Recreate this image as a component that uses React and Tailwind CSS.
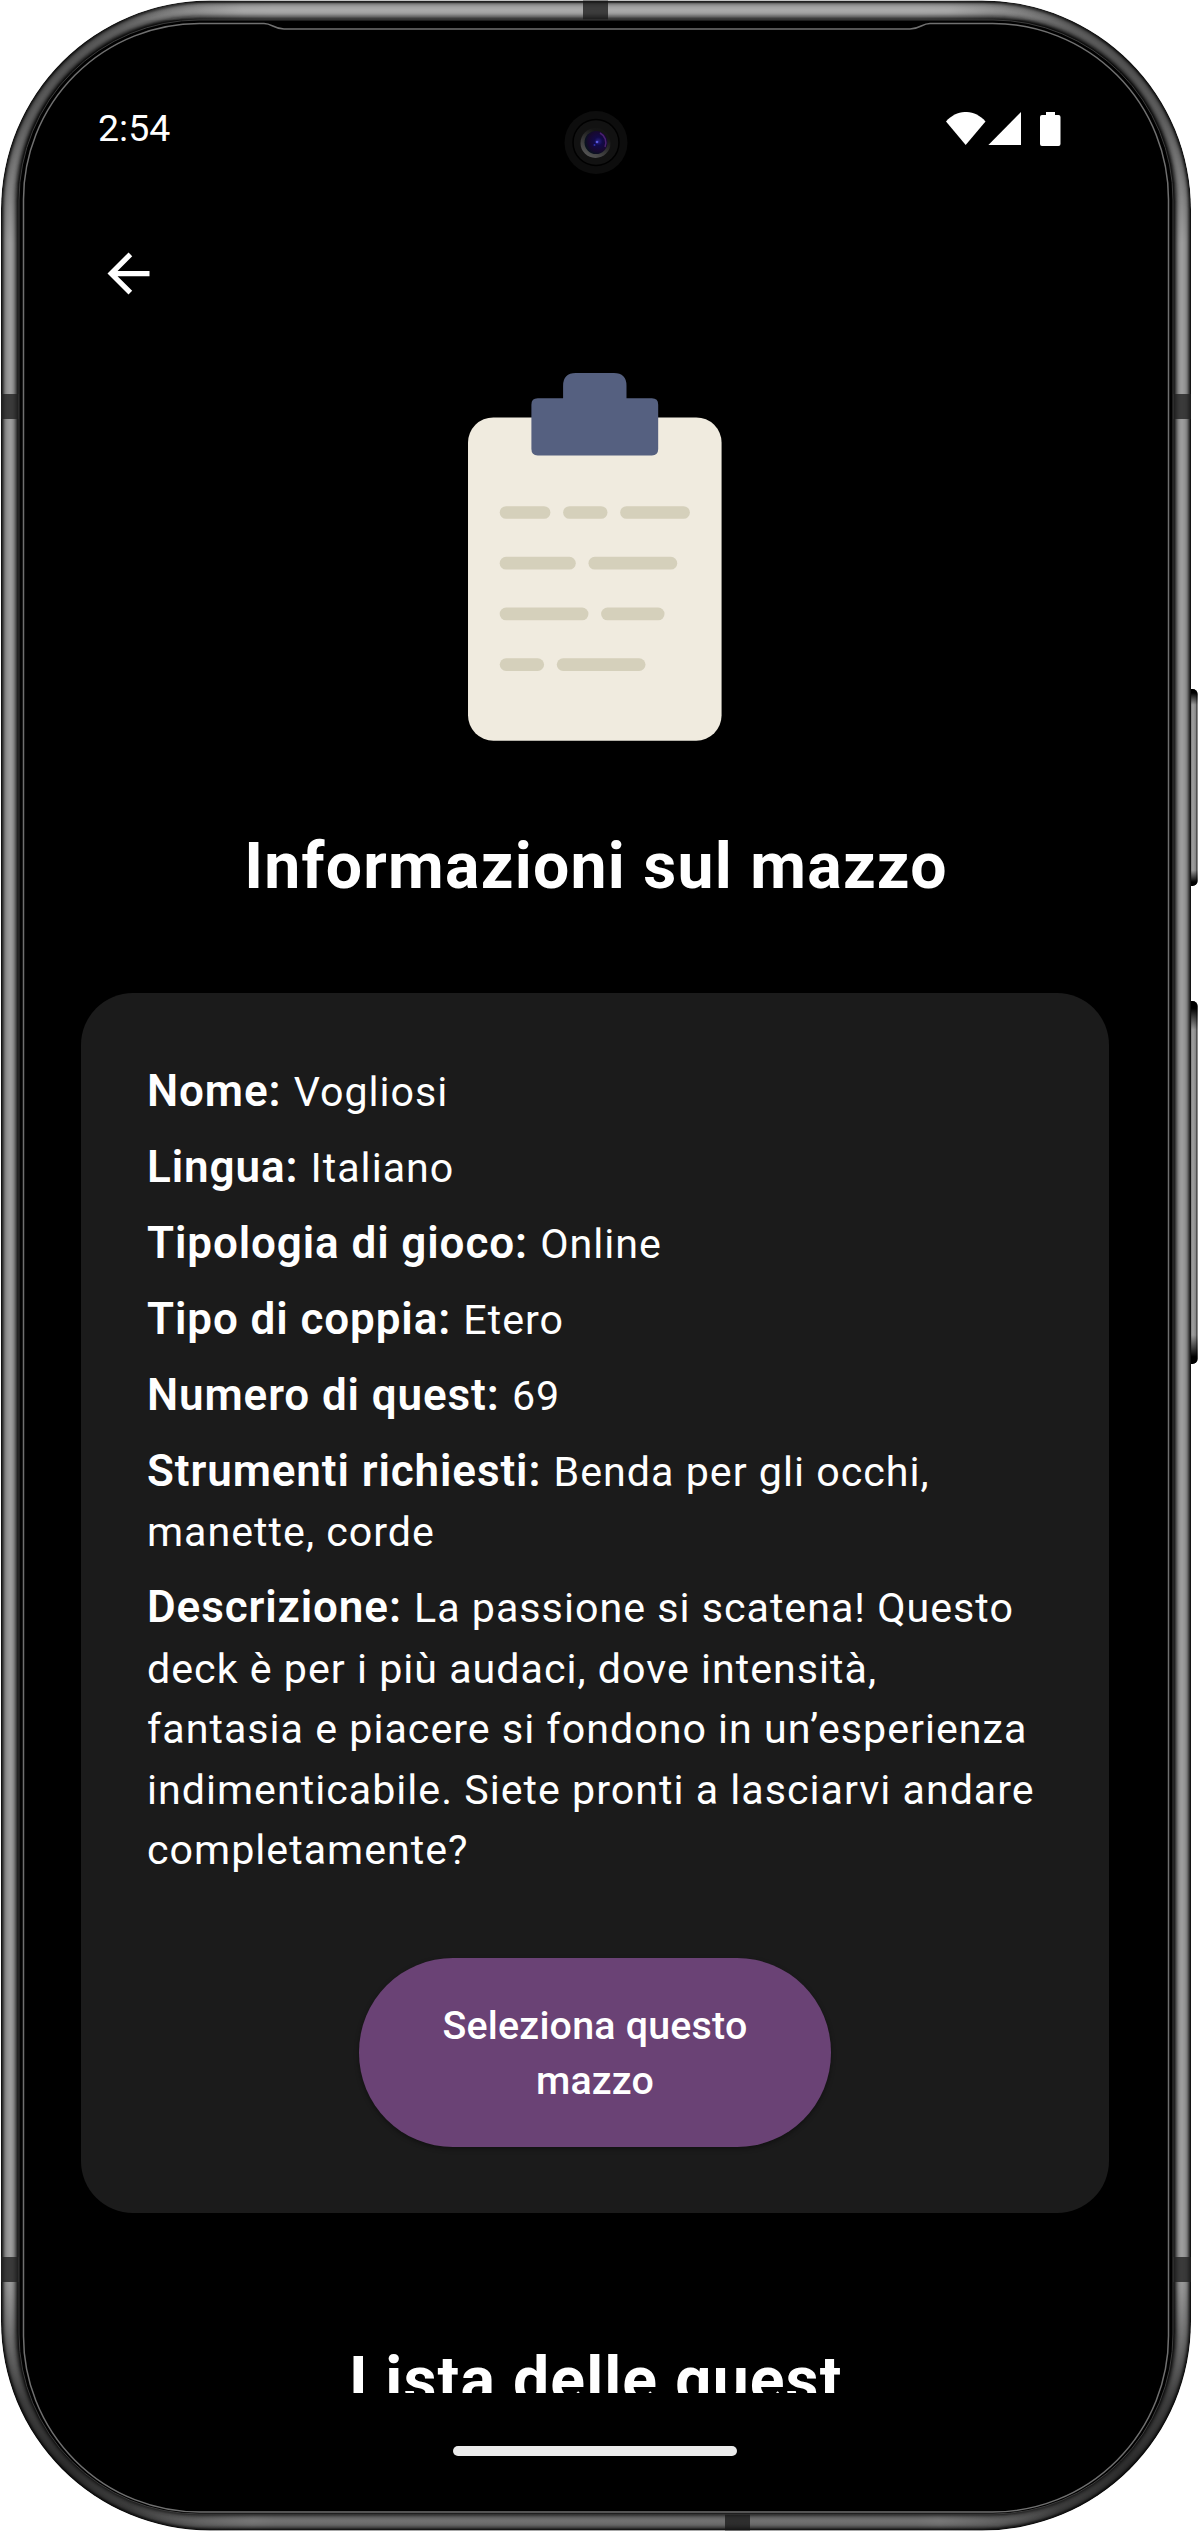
const FRAME_RINGS = [
  [0, "#141414"], [1, "#2e2e2e"], [2, "#4c4c4c"], [3, "#6a6a6a"], [4, "#808080"], [5, "#8c8c8c"],
  [6, "#949494"], [7, "#989898"], [8, "#9c9c9c"], [9, "#9c9c9c"], [10, "#989898"], [11, "#909090"],
  [12, "#848484"], [13, "#707070"], [14, "#585858"], [15, "#3c3c3c"], [16, "#222222"], [17, "#101010"],
];

const DETAILS = [
  ["Nome:", "Vogliosi"],
  ["Lingua:", "Italiano"],
  ["Tipologia di gioco:", "Online"],
  ["Tipo di coppia:", "Etero"],
  ["Numero di quest:", "69"],
  ["Strumenti richiesti:", "Benda per gli occhi, manette, corde"],
  [
    "Descrizione:",
    "La passione si scatena! Questo deck è per i più audaci, dove intensità, fantasia e piacere si fondono in un’esperienza indimenticabile. Siete pronti a lasciarvi andare completamente?",
  ],
];

function PhoneFrame() {
  return (
    <svg className="absolute inset-0" width="1198" height="2531" viewBox="0 0 1198 2531" fill="none" aria-hidden="true">
      <defs>
        <radialGradient id="cornerTop">
          <stop offset="0" stopColor="#000" stopOpacity="0.48" />
          <stop offset="0.35" stopColor="#000" stopOpacity="0.4" />
          <stop offset="1" stopColor="#000" stopOpacity="0" />
        </radialGradient>
        <radialGradient id="cornerBottom">
          <stop offset="0" stopColor="#000" stopOpacity="0.72" />
          <stop offset="0.4" stopColor="#000" stopOpacity="0.6" />
          <stop offset="1" stopColor="#000" stopOpacity="0" />
        </radialGradient>
        <linearGradient id="edgeLight" x1="0" x2="1" y1="0" y2="0">
          <stop offset="0.04" stopColor="#fff" stopOpacity="0" />
          <stop offset="0.2" stopColor="#fff" stopOpacity="0.14" />
          <stop offset="0.8" stopColor="#fff" stopOpacity="0.14" />
          <stop offset="0.96" stopColor="#fff" stopOpacity="0" />
        </linearGradient>
        <linearGradient id="edgeShade" x1="0" x2="1" y1="0" y2="0">
          <stop offset="0.04" stopColor="#000" stopOpacity="0" />
          <stop offset="0.2" stopColor="#000" stopOpacity="0.28" />
          <stop offset="0.8" stopColor="#000" stopOpacity="0.28" />
          <stop offset="0.96" stopColor="#000" stopOpacity="0" />
        </linearGradient>
        <linearGradient id="key" x1="0" x2="1" y1="0" y2="0">
          <stop offset="0" stopColor="#555" />
          <stop offset="0.4" stopColor="#606060" />
          <stop offset="0.65" stopColor="#a0a0a0" />
          <stop offset="0.85" stopColor="#8a8a8a" />
          <stop offset="1" stopColor="#1a1a1a" />
        </linearGradient>
        <linearGradient id="keyEnds" x1="0" x2="0" y1="0" y2="1">
          <stop offset="0.02" stopColor="#000" />
          <stop offset="0.08" stopColor="#000" stopOpacity="0" />
          <stop offset="0.92" stopColor="#000" stopOpacity="0" />
          <stop offset="0.98" stopColor="#000" />
        </linearGradient>
        <clipPath id="body">
          <rect x="1" y="0.5" width="1190" height="2530" rx="209" />
        </clipPath>
      </defs>
      {[[689, 197], [1001, 363]].map(([y, h]) => (
        <g key={y}>
          <rect x="1184" y={y} width="13.5" height={h} rx="5" fill="url(#key)" />
          <rect x="1184" y={y} width="13.5" height={h} rx="5" fill="url(#keyEnds)" />
        </g>
      ))}
      <g clipPath="url(#body)">
        {FRAME_RINGS.map(([d, c]) => (
          <rect key={d} x={1 + d} y={0.5 + d * 1.08} width={1190 - d * 2} height={2530 - d * 2.12} rx={209 - d * 1.6} fill={c} />
        ))}
        <circle cx="60" cy="60" r="190" fill="url(#cornerTop)" />
        <circle cx="1132" cy="60" r="190" fill="url(#cornerTop)" />
        <circle cx="60" cy="2471" r="200" fill="url(#cornerBottom)" />
        <circle cx="1132" cy="2471" r="200" fill="url(#cornerBottom)" />
        <rect x="60" y="2500" width="1072" height="31" fill="url(#edgeShade)" />
        <rect x="60" y="3" width="1072" height="17" fill="url(#edgeLight)" />
        <rect x="0" y="394" width="1198" height="25" fill="#222" opacity="0.8" />
        <rect x="0" y="2257" width="1198" height="25" fill="#222" opacity="0.8" />
        <rect x="583" y="0" width="25" height="24" fill="#181818" opacity="0.75" />
        <rect x="725" y="2506" width="25" height="25" fill="#181818" opacity="0.75" />
      </g>
      <rect x="19" y="20" width="1154" height="2494" rx="180" fill="#000" stroke="#3c3c3c" strokeWidth="1" />
      <path
        d="M199.500 23.500H264C272 23.500 274 29 284 29H910C920 29 922 23.500 930 23.500H992.500A176 176 0 0 1 1168.500 199.500V2336A176 176 0 0 1 992.500 2512H199.500A176 176 0 0 1 23.500 2336V199.500A176 176 0 0 1 199.500 23.500Z"
        stroke="#707070"
        strokeWidth="1.5"
      />
    </svg>
  );
}

function Camera() {
  return (
    <svg className="absolute left-[564px] top-[111px]" width="64" height="64" viewBox="0 0 64 64" aria-hidden="true">
      <defs>
        <radialGradient id="lens" cx="0.6" cy="0.45" r="0.6">
          <stop offset="0" stopColor="#2a2188" />
          <stop offset="0.3" stopColor="#120a48" />
          <stop offset="0.7" stopColor="#170830" />
          <stop offset="1" stopColor="#07121c" />
        </radialGradient>
        <linearGradient id="lensRing" x1="0.8" y1="0" x2="0.2" y2="1">
          <stop offset="0.2" stopColor="#151515" />
          <stop offset="1" stopColor="#5a5a5a" />
        </linearGradient>
      </defs>
      <circle cx="32" cy="31.500" r="31.500" fill="#0d0d0d" />
      <circle cx="32" cy="31.500" r="23" fill="#121212" stroke="#000" strokeWidth="1.500" />
      <circle cx="31.500" cy="32" r="15" fill="url(#lensRing)" />
      <circle cx="32" cy="31.500" r="11.500" fill="url(#lens)" />
      <path d="M36 22a11 11 0 0 1 5 14" stroke="#4b2070" strokeWidth="1.500" fill="none" />
      <circle cx="33" cy="31" r="1.300" fill="#5a5ae0" />
      <circle cx="30.500" cy="34" r="1" fill="#2c2ca8" />
    </svg>
  );
}

function StatusBar() {
  return (
    <div className="flex h-[40px] items-center justify-between pl-[98px] pr-[131px]">
      <span className="text-[37.500px] leading-[44px]">2:54</span>
      <svg className="mt-[2px]" width="115" height="34" viewBox="0 0 115 34" fill="#fff" aria-hidden="true">
        <path d="M0 9.500C11-3.200 28.500-3.200 39.500 9.500L19.700 33Z" />
        <path d="M42.400 33L75 0V33Z" />
        <path d="M100 0h9v3h3.500q2 0 2 2v27q0 2-2 2h-16.500q-2 0-2-2v-27q0-2 2-2h4z" />
      </svg>
    </div>
  );
}

function BackButton() {
  return (
    <button type="button" aria-label="Indietro" className="ml-[97px] mt-[94px] block size-[63px]">
      <svg viewBox="0 0 24 24" fill="#fff" className="size-full">
        <path d="M20 11H7.830l5.590-5.590L12 4l-8 8 8 8 1.410-1.410L7.830 13H20v-2z" />
      </svg>
    </button>
  );
}

const NOTE_LINES = [
  [5, 21, 8], [15, 21, 7], [24, 21, 11],
  [5, 29, 12], [19, 29, 14],
  [5, 37, 14], [21, 37, 10],
  [5, 45, 7], [14, 45, 14],
];

function Clipboard() {
  return (
    <svg className="ml-[468.300px] mt-[68px] block h-[367.700px] w-[253.600px]" viewBox="0 0 40 58" aria-hidden="true">
      <rect y="7" width="40" height="51" rx="4" fill="#f0ebdf" />
      <path d="M15 2q0-2 2-2h6q2 0 2 2v2h4q1 0 1 1v7q0 1-1 1h-18q-1 0-1-1v-7q0-1 1-1h4z" fill="#556080" />
      {NOTE_LINES.map(([x, y, w]) => (
        <rect key={`${x}-${y}`} x={x} y={y} width={w} height="2" rx="1" fill="#d5d0bb" />
      ))}
    </svg>
  );
}

export default function App() {
  return (
    <div className="relative h-[2531px] w-[1198px] overflow-hidden bg-white font-['Roboto',sans-serif] text-white">
      <PhoneFrame />
      <Camera />
      <div className="relative flex h-full w-[1192px] flex-col">
        <main className="h-[2393px] overflow-hidden pt-[108px]">
          <StatusBar />
          <BackButton />
          <Clipboard />
          <h1 className="mt-[85.300px] text-center text-[64.300px] font-bold leading-[80px] tracking-[1.250px]">
            Informazioni sul mazzo
          </h1>
          <section className="ml-[81px] mt-[87px] h-[1220px] w-[1028px] rounded-[52px] bg-[#1b1b1b] pl-[66px] pr-[70px] pt-[68px]">
            <div className="flex flex-col gap-[14.500px] text-[41.200px] leading-[60.500px] tracking-[1px]">
              {DETAILS.map(([label, value]) => (
                <p key={label}>
                  <span className="mr-[1px] text-[44px] font-semibold tracking-[0.900px]">{label}</span> {value}
                </p>
              ))}
            </div>
            <button
              type="button"
              className="ml-[212px] mt-[77.500px] block h-[189px] w-[472px] rounded-[94px] bg-[#6a4275] px-[60px] text-[39.400px] font-medium leading-[55px] tracking-[0.200px] shadow-[0_2px_5px_rgba(0,0,0,0.4)]"
            >
              Seleziona questo mazzo
            </button>
          </section>
          <h2 className="mt-[127px] text-center text-[64.300px] font-bold leading-[80px] tracking-[1.100px]">
            Lista delle quest
          </h2>
        </main>
        <div className="mx-auto mt-[53px] h-[10px] w-[284px] translate-x-[-1px] rounded-full bg-[#ebebeb]" />
      </div>
    </div>
  );
}
